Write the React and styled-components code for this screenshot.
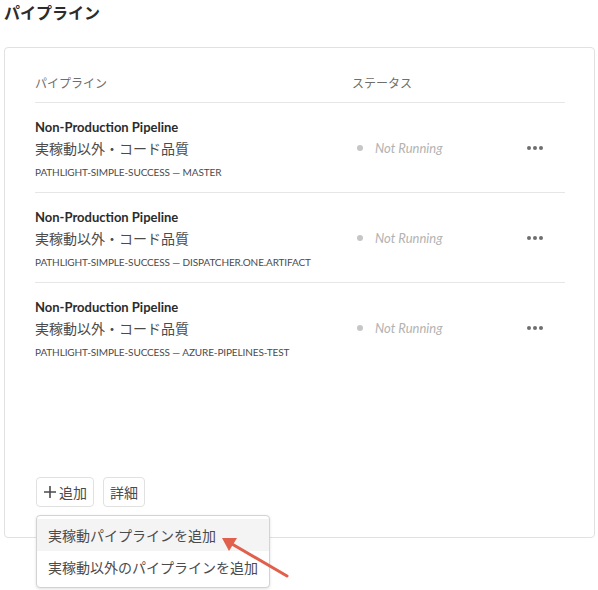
import React from 'react'
import styled, { createGlobalStyle } from 'styled-components'

const GlobalStyle = createGlobalStyle`
  html, body {
    margin: 0;
    padding: 0;
    background: #fff;
    font-family: Lato, "Noto Sans CJK JP", sans-serif;
    color: #2c2c2c;
  }
`

const pipelines = [
  { name: 'Non-Production Pipeline', kind: '実稼動以外・コード品質', repo: 'PATHLIGHT-SIMPLE-SUCCESS — MASTER' },
  { name: 'Non-Production Pipeline', kind: '実稼動以外・コード品質', repo: 'PATHLIGHT-SIMPLE-SUCCESS — DISPATCHER.ONE.ARTIFACT' },
  { name: 'Non-Production Pipeline', kind: '実稼動以外・コード品質', repo: 'PATHLIGHT-SIMPLE-SUCCESS — AZURE-PIPELINES-TEST' },
]

const App = () => {
  return (
    <Page>
      <GlobalStyle />
      <PageTitle>パイプライン</PageTitle>
      <Card>
        <HeaderRow>
          <HeaderCell>パイプライン</HeaderCell>
          <HeaderCell>ステータス</HeaderCell>
          <span />
        </HeaderRow>
        {pipelines.map((p, idx) => (
          <Row key={idx} last={idx === pipelines.length - 1}>
            <NameCell>
              <PipelineName>{p.name}</PipelineName>
              <PipelineKind>{p.kind}</PipelineKind>
              <PipelineRepo>{p.repo}</PipelineRepo>
            </NameCell>
            <Status>
              <Dot />
              <StatusText>Not Running</StatusText>
            </Status>
            <More>
              <i /><i /><i />
            </More>
          </Row>
        ))}
        <Footer>
          <Button>
            <PlusIcon viewBox="0 0 14 14">
              <path d="M7 1v12M1 7h12" stroke="#4b4b4b" strokeWidth="1.6" />
            </PlusIcon>
            追加
          </Button>
          <Button>詳細</Button>
          <Menu>
            <MenuItem active>実稼動パイプラインを追加</MenuItem>
            <MenuItem>実稼動以外のパイプラインを追加</MenuItem>
          </Menu>
        </Footer>
      </Card>
      <Arrow width="80" height="50" viewBox="0 0 80 50">
        <line x1="73" y1="44" x2="18" y2="12" stroke="#e0604c" strokeWidth="3" strokeLinecap="round" />
        <polygon points="8,6 23,6 15,19" fill="#e0604c" />
      </Arrow>
    </Page>
  )
}

const Page = styled.div`
  position: relative;
  width: 598px;
  height: 590px;
  box-sizing: border-box;
  padding: 0 3px 0 4px;
`

const PageTitle = styled.h1`
  margin: 0;
  padding-top: 2px;
  font-size: 16px;
  line-height: 21px;
  font-weight: 700;
  color: #2c2c2c;
  height: 45px;
`

const Card = styled.div`
  height: 491px;
  box-sizing: border-box;
  border: 1px solid #e1e1e1;
  border-radius: 4px;
  padding: 24px 29px 30px 30px;
  display: flex;
  flex-direction: column;
`

const HeaderRow = styled.div`
  display: grid;
  grid-template-columns: 317px 1fr 60px;
  height: 31px;
  box-sizing: border-box;
  border-bottom: 1px solid #e6e6e6;
`

const HeaderCell = styled.span`
  font-size: 12px;
  line-height: 24px;
  color: #6e6e6e;
`

const Row = styled.div`
  display: grid;
  grid-template-columns: 317px 1fr 60px;
  height: 90px;
  box-sizing: border-box;
  border-bottom: ${p => (p.last ? 'none' : '1px solid #e6e6e6')};
`

const NameCell = styled.div`
  display: flex;
  flex-direction: column;
  padding-top: 15px;
`

const PipelineName = styled.div`
  font-size: 13px;
  line-height: 18px;
  font-weight: 700;
  color: #2c2c2c;
`

const PipelineKind = styled.div`
  margin-top: 2px;
  font-size: 14px;
  line-height: 22px;
  color: #4b4b4b;
`

const PipelineRepo = styled.div`
  margin-top: 4px;
  font-size: 10px;
  line-height: 16px;
  letter-spacing: -0.12px;
  color: #4b4b4b;
`

const Status = styled.div`
  display: flex;
  align-items: center;
  padding-left: 5px;
  gap: 12px;
`

const Dot = styled.span`
  width: 6px;
  height: 6px;
  border-radius: 50%;
  background: #c6c6c6;
`

const StatusText = styled.span`
  font-size: 13px;
  font-style: italic;
  color: #b3b3b3;
`

const More = styled.div`
  display: flex;
  align-items: center;
  justify-content: flex-end;
  padding-right: 22px;
  gap: 2px;

  i {
    width: 4px;
    height: 4px;
    border-radius: 50%;
    background: #6e6e6e;
  }
`

const Footer = styled.div`
  position: relative;
  margin-top: auto;
  display: flex;
  gap: 9px;
  padding-left: 1px;
`

const Button = styled.button`
  display: flex;
  align-items: center;
  gap: 2px;
  height: 30px;
  padding: 0 6px;
  box-sizing: border-box;
  border: 1px solid #e1e1e1;
  border-radius: 4px;
  background: #fff;
  font-family: Lato, "Noto Sans CJK JP", sans-serif;
  font-size: 14px;
  color: #4b4b4b;
`

const PlusIcon = styled.svg`
  width: 14px;
  height: 14px;
`

const Menu = styled.div`
  position: absolute;
  top: 38px;
  left: 1px;
  width: 234px;
  box-sizing: border-box;
  padding: 3px 0 4px;
  background: #fff;
  border: 1px solid #d3d3d3;
  border-radius: 4px;
  box-shadow: 0 1px 3px rgba(0, 0, 0, 0.12);
`

const MenuItem = styled.div`
  height: 32px;
  display: flex;
  align-items: center;
  padding-left: 11px;
  font-size: 14px;
  color: #4b4b4b;
  background: ${p => (p.active ? '#f4f4f4' : 'transparent')};
`

const Arrow = styled.svg`
  position: absolute;
  left: 214px;
  top: 532px;
`

export default App
